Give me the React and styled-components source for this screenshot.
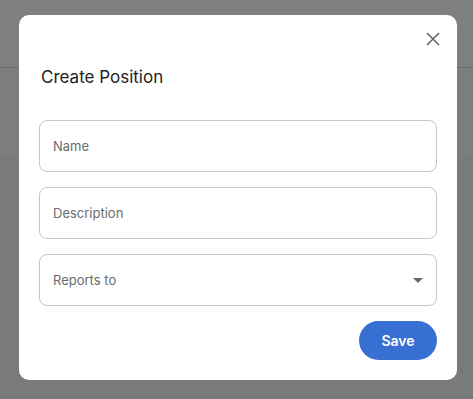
import React from 'react'
import styled, { createGlobalStyle } from 'styled-components'

const textDark = '#222222'
const textGrey = '#6b6b6b'
const borderGrey = '#c6c6c6'
const blue = '#386fd2'

const GlobalStyle = createGlobalStyle`
    html, body {
        margin: 0;
        padding: 0;
        height: 100%;
    }
    body {
        font-family: Inter, "Noto Sans", sans-serif;
        background-color: #f4f4f4;
    }
    #root {
        height: 100%;
    }
`

const Page = styled.div`
    height: 100%;
    display: flex;
    flex-direction: column;
`

const PageHeader = styled.header`
    height: 67px;
    flex-shrink: 0;
    background-color: #ffffff;
    border-bottom: 1px solid #dcdcdc;
`

const PageToolbar = styled.div`
    height: 90px;
    background-color: #fafafa;
`

const PageBody = styled.main`
    flex: 1;
    background-color: #f4f4f4;
`

const Overlay = styled.div`
    position: fixed;
    inset: 0;
    background-color: rgba(0, 0, 0, 0.5);
    display: flex;
    align-items: flex-start;
    padding: 15px 0 0 19px;
`

const Modal = styled.div`
    width: 438px;
    box-sizing: border-box;
    background-color: #ffffff;
    border-radius: 10px;
    padding: 12px 20px 20px;
    display: flex;
    flex-direction: column;
`

const CloseRow = styled.div`
    display: flex;
    justify-content: flex-end;
    margin-right: -8px;
`

const CloseButton = styled.button`
    width: 24px;
    height: 24px;
    padding: 0;
    border: none;
    background: transparent;
    display: flex;
    align-items: center;
    justify-content: center;
    color: #666666;
    cursor: pointer;
`

const Title = styled.h2`
    margin: 14px 0 31px 2px;
    font-size: 17px;
    line-height: 24px;
    font-weight: 400;
    color: ${textDark};
`

const Form = styled.div`
    display: flex;
    flex-direction: column;
    gap: 15px;
`

const Field = styled.input`
    height: 52px;
    box-sizing: border-box;
    width: 100%;
    border: 1px solid ${borderGrey};
    border-radius: 8px;
    padding: 0 13px;
    font-family: Inter, "Noto Sans", sans-serif;
    font-size: 13px;
    color: ${textDark};
    outline: none;

    &::placeholder {
        color: ${textGrey};
    }
`

const SelectBox = styled.div`
    height: 52px;
    box-sizing: border-box;
    border: 1px solid ${borderGrey};
    border-radius: 8px;
    padding: 0 13px 0 13px;
    display: flex;
    align-items: center;
    justify-content: space-between;
    font-size: 13px;
    color: ${textGrey};
    cursor: pointer;
`

const Footer = styled.div`
    display: flex;
    justify-content: flex-end;
    margin-top: 15px;
`

const SaveButton = styled.button`
    width: 78px;
    height: 39px;
    border: none;
    border-radius: 20px;
    background-color: ${blue};
    color: #ffffff;
    font-family: Inter, "Noto Sans", sans-serif;
    font-size: 14px;
    font-weight: 600;
    cursor: pointer;
`

export default function App() {
    return (
        <>
            <GlobalStyle />
            <Page>
                <PageHeader />
                <PageToolbar />
                <PageBody />
            </Page>
            <Overlay>
                <Modal>
                    <CloseRow>
                        <CloseButton aria-label="Close">
                            <svg width="14" height="14" viewBox="0 0 14 14">
                                <path d="M1 1L13 13M13 1L1 13" stroke="currentColor" strokeWidth="1.6" />
                            </svg>
                        </CloseButton>
                    </CloseRow>
                    <Title>Create Position</Title>
                    <Form>
                        <Field placeholder="Name" />
                        <Field placeholder="Description" />
                        <SelectBox>
                            <span>Reports to</span>
                            <svg width="10" height="5" viewBox="0 0 10 5">
                                <path d="M0 0H10L5 5Z" fill="#666666" />
                            </svg>
                        </SelectBox>
                    </Form>
                    <Footer>
                        <SaveButton>Save</SaveButton>
                    </Footer>
                </Modal>
            </Overlay>
        </>
    )
}
